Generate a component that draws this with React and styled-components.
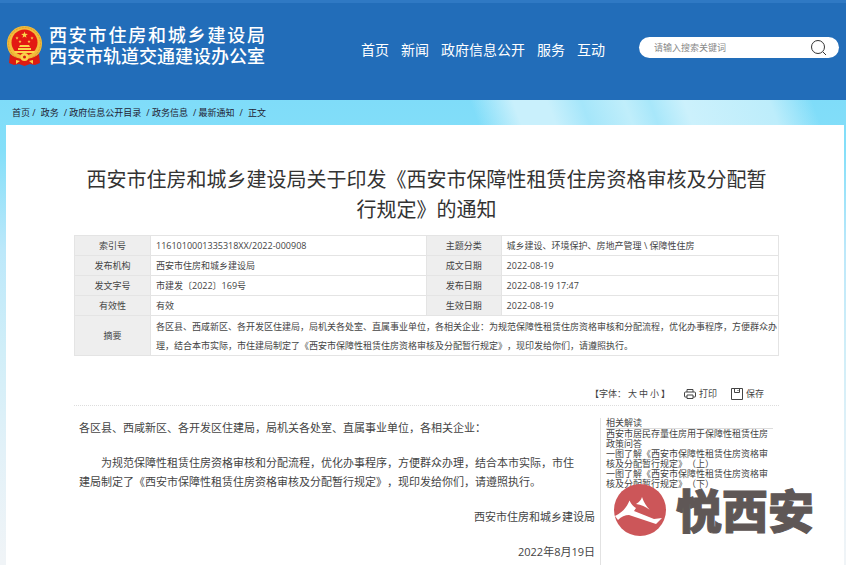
import React from "react";
import styled, { createGlobalStyle } from "styled-components";

const Global = createGlobalStyle`
  * { box-sizing: border-box; }
  body {
    margin: 0;
    font-family: "Open Sans", "Noto Sans CJK SC", sans-serif;
    text-spacing-trim: space-all;
    color: #444;
    background: #fff;
  }
  a { color: inherit; text-decoration: none; }
`;

const Page = styled.div`
  display: flex;
  flex-direction: column;
  min-height: 100vh;
  background: linear-gradient(#7fdcf9 100px, #84dff9 150px, #bce8fa 250px, #d0eef8 350px, #e2f1f8 450px, #f0f4f7 560px);
`;

const Header = styled.header`
  display: flex;
  align-items: center;
  height: 100px;
  padding: 0 7px 8px 6px;
  background: #226db9;
  border-top: 3px solid #2f79c4;
`;

const Brand = styled.a`
  display: flex;
  align-items: center;
  gap: 6px;
  margin-bottom: 4px;
  color: #fff;
`;

const Emblem = styled.svg`
  width: 37px;
  height: 40px;
`;

const BrandText = styled.span`
  display: flex;
  flex-direction: column;
  font-size: 18px;
  line-height: 21px;
  font-weight: 500;
`;

const BrandLine = styled.span`
  text-align-last: justify;
`;

const Nav = styled.nav`
  display: flex;
  gap: 12px;
  margin: 5px 0 0 auto;
  font-size: 14px;
  line-height: 20px;
  color: #fff;
`;

const Search = styled.form`
  display: flex;
  align-items: center;
  width: 200px;
  height: 21px;
  margin-left: 34px;
  padding: 0 12px 0 15px;
  border-radius: 11px;
  background: #fff;
`;

const SearchInput = styled.input`
  flex: 1;
  min-width: 0;
  padding: 0;
  border: 0;
  outline: 0;
  background: none;
  font: inherit;
  font-size: 9px;
  &::placeholder { color: #888; }
`;

const IconButton = styled.button`
  display: flex;
  align-items: center;
  gap: 3px;
  padding: 0;
  border: 0;
  background: none;
  color: inherit;
  font: inherit;
`;

const Crumbs = styled.nav`
  display: flex;
  align-items: center;
  gap: 5px;
  height: 25px;
  padding-left: 12px;
  font-size: 9px;
  color: #223;
  background: linear-gradient(
    70deg,
    transparent 56%,
    #c9f0fc 61%,
    #c9f0fc 65%,
    #a5e6fa 69%,
    #c0eefb 74%,
    #a8e7fa 77%,
    #ccf1fc 81%,
    #bdedfb 91%,
    transparent 96%
  );
`;

const Sheet = styled.main`
  position: relative;
  flex: 1;
  display: flex;
  flex-direction: column;
  margin: 0 2px 0 6px;
  padding: 40px 65px 0 68px;
  background: #fff;
`;

const Title = styled.h1`
  margin: 0;
  font-size: 20px;
  line-height: 30px;
  font-weight: 400;
  text-align: center;
  color: #333;
`;

const Info = styled.table`
  width: 100%;
  margin-top: 10px;
  border-collapse: collapse;
  table-layout: fixed;
  font-size: 9px;
  line-height: 19px;
`;

const Label = styled.th`
  padding: 0;
  border: 1px solid #e4e4e4;
  background: #eee;
  font-weight: 400;
`;

const Value = styled.td`
  padding: ${(p) => (p.$tall ? "1px 0 0 5px" : "0 0 0 5px")};
  border: 1px solid #e4e4e4;
`;

const Tools = styled.div`
  display: flex;
  align-items: center;
  justify-content: flex-end;
  gap: 14px;
  height: 24px;
  margin-top: 26px;
  padding-right: 15px;
  border-bottom: 1px dotted #ddd;
  font-size: 9px;
`;

const Sizes = styled.span`
  display: flex;
  gap: 2px;
`;

const Columns = styled.div`
  flex: 1;
  display: flex;
  gap: 5px;
  padding-top: 12px;
`;

const Article = styled.article`
  flex: 1;
  padding-left: 5px;
  font-size: 11px;
  line-height: 19px;
`;

const Para = styled.p`
  margin: 0 12px 16px 0;
  text-indent: ${(p) => (p.$indent ? "2em" : 0)};
`;

const Signed = styled.p`
  margin: 0 0 16px;
  text-align: right;
  &:last-child { margin-bottom: 0; }
`;

const Related = styled.aside`
  width: 179px;
  padding: 0 6px 0 5px;
  border-left: 1px solid #e2e2e2;
  font-size: 9px;
  line-height: 10px;
`;

const RelatedTitle = styled.h2`
  margin: 0;
  border-bottom: 1px solid #ddd;
  font-size: 9px;
  line-height: 10px;
  font-weight: 400;
`;

const RelatedLink = styled.a`
  display: block;
`;

const Watermark = styled.div`
  position: absolute;
  right: 30px;
  bottom: 29px;
  display: flex;
  align-items: center;
  gap: 10px;
  font-size: 46px;
  line-height: 52px;
  font-weight: 900;
  color: #5f5756;
  -webkit-text-stroke: 1px #5f5756;
`;

const rows = [
  ["索引号", "1161010001335318XX/2022-000908", "主题分类", "城乡建设、环境保护、房地产管理 \\ 保障性住房"],
  ["发布机构", "西安市住房和城乡建设局", "成文日期", "2022-08-19"],
  ["发文字号", "市建发〔2022〕169号", "发布日期", "2022-08-19 17:47"],
  ["有效性", "有效", "生效日期", "2022-08-19"],
];

const crumbs = ["首页 /", "政务", "/ 政府信息公开目录", "/ 政务信息", "/ 最新通知", "/", "正文"];

const star = (x, y, r) =>
  Array.from({ length: 10 }, (_, i) => {
    const a = (Math.PI * i) / 5 - Math.PI / 2;
    const d = i % 2 ? r * 0.4 : r;
    return `${x + d * Math.cos(a)},${y + d * Math.sin(a)}`;
  }).join(" ");

function NationalEmblem() {
  return (
    <Emblem viewBox="0 0 37 40" aria-hidden="true">
      <circle cx="18.500" cy="17.500" r="17.500" fill="#f3bd3b" />
      <circle cx="18.500" cy="17.500" r="16" fill="none" stroke="#dd9a26" strokeWidth="1" strokeDasharray="2 1" />
      <circle cx="18.500" cy="16.500" r="13" fill="#e31913" />
      <path d="M4 28q6 5 14.500 5T33 28l1 9-5 2-5-1-5.500 2-5.500-2-5 1-5-2z" fill="#dd1c12" />
      <g fill="#fbd54a">
        <polygon points={star(18.5, 9, 3.5)} />
        <polygon points={star(11, 12, 1.7)} />
        <polygon points={star(26, 12, 1.7)} />
        <polygon points={star(14, 15.5, 1.7)} />
        <polygon points={star(23, 15.5, 1.7)} />
        <path d="M14 19h9l1 2h-11zM12 22h13v2h-13zM8 25h21l-1 2H9z" />
        <circle cx="18.500" cy="31" r="4" />
        <path d="M10 34l4 1-4 3zM27 34l-4 1 4 3z" />
      </g>
      <circle cx="18.500" cy="31" r="1.500" fill="#d91c12" />
    </Emblem>
  );
}

export default function App() {
  return (
    <Page>
      <Global />
      <Header>
        <Brand href="#">
          <NationalEmblem />
          <BrandText>
            <BrandLine>西安市住房和城乡建设局</BrandLine>
            <BrandLine>西安市轨道交通建设办公室</BrandLine>
          </BrandText>
        </Brand>
        <Nav>
          {["首页", "新闻", "政府信息公开", "服务", "互动"].map((t) => (
            <a href="#" key={t}>{t}</a>
          ))}
        </Nav>
        <Search onSubmit={(e) => e.preventDefault()}>
          <SearchInput aria-label="搜索" placeholder="请输入搜索关键词" />
          <IconButton type="submit" aria-label="搜索">
            <svg width="17" height="17" viewBox="0 0 17 17" fill="none" stroke="#333">
              <circle cx="8" cy="8" r="6.500" />
              <path d="M13 13l3 3" />
            </svg>
          </IconButton>
        </Search>
      </Header>
      <Crumbs>
        {crumbs.map((t) => (
          <a href="#" key={t}>{t}</a>
        ))}
      </Crumbs>
      <Sheet>
        <Title>
          西安市住房和城乡建设局关于印发《西安市保障性租赁住房资格审核及分配暂
          <br />
          行规定》的通知
        </Title>
        <Info>
          <colgroup>
            <col width="10.8%" />
            <col width="39.2%" />
            <col width="10.6%" />
            <col />
          </colgroup>
          <tbody>
            {rows.map(([a, b, c, d]) => (
              <tr key={a}>
                <Label scope="row">{a}</Label>
                <Value>{b}</Value>
                <Label scope="row">{c}</Label>
                <Value>{d}</Value>
              </tr>
            ))}
            <tr>
              <Label scope="row">摘要</Label>
              <Value colSpan={3} $tall>
                各区县、西咸新区、各开发区住建局，局机关各处室、直属事业单位，各相关企业：为规范保障性租赁住房资格审核和分配流程，优化办事程序，方便群众办理，结合本市实际，市住建局制定了《西安市保障性租赁住房资格审核及分配暂行规定》，现印发给你们，请遵照执行。
              </Value>
            </tr>
          </tbody>
        </Info>
        <Tools>
          <Sizes>
            <span>【字体：</span>
            <IconButton type="button">大</IconButton>
            <IconButton type="button">中</IconButton>
            <IconButton type="button">小</IconButton>
            <span>】</span>
          </Sizes>
          <IconButton type="button">
            <svg width="12" height="12" viewBox="0 0 12 12" fill="none" stroke="#444">
              <path d="M3 4V1.500h6V4M3 9H1q-.5 0-.5-.5V5q0-1 1-1h9q1 0 1 1v3.500q0 .5-.5.5H9M3 7h6v3.500H3z" />
            </svg>
            打印
          </IconButton>
          <IconButton type="button">
            <svg width="12" height="12" viewBox="0 0 12 12" fill="none" stroke="#444">
              <path d="M.5.5h11v11H.5zM3.500.5v4h5v-4M7 2v1" />
            </svg>
            保存
          </IconButton>
        </Tools>
        <Columns>
          <Article>
            <Para>各区县、西咸新区、各开发区住建局，局机关各处室、直属事业单位，各相关企业：</Para>
            <Para $indent>
              为规范保障性租赁住房资格审核和分配流程，优化办事程序，方便群众办理，结合本市实际，市住建局制定了《西安市保障性租赁住房资格审核及分配暂行规定》，现印发给你们，请遵照执行。
            </Para>
            <Signed>西安市住房和城乡建设局</Signed>
            <Signed>2022年8月19日</Signed>
          </Article>
          <Related>
            <RelatedTitle>相关解读</RelatedTitle>
            <RelatedLink href="#">西安市居民存量住房用于保障性租赁住房政策问答</RelatedLink>
            <RelatedLink href="#">一图了解《西安市保障性租赁住房资格审核及分配暂行规定》（上）</RelatedLink>
            <RelatedLink href="#">一图了解《西安市保障性租赁住房资格审核及分配暂行规定》（下）</RelatedLink>
          </Related>
        </Columns>
        <Watermark>
          <svg width="52" height="52" viewBox="0 0 52 52" aria-hidden="true">
            <circle cx="26" cy="26" r="26" fill="#cc5659" />
            <path d="M1 32C9 28 13 23 15.500 16.500Q18 22 22 24l-2 3 20 8 8-1-6 6L15 31Q9 31 4 36z" fill="#fff" />
            <path d="M22 20q5-3 6-7 3 9 10 15-7-7-16-8z" fill="#fff" />
          </svg>
          悦西安
        </Watermark>
      </Sheet>
    </Page>
  );
}
